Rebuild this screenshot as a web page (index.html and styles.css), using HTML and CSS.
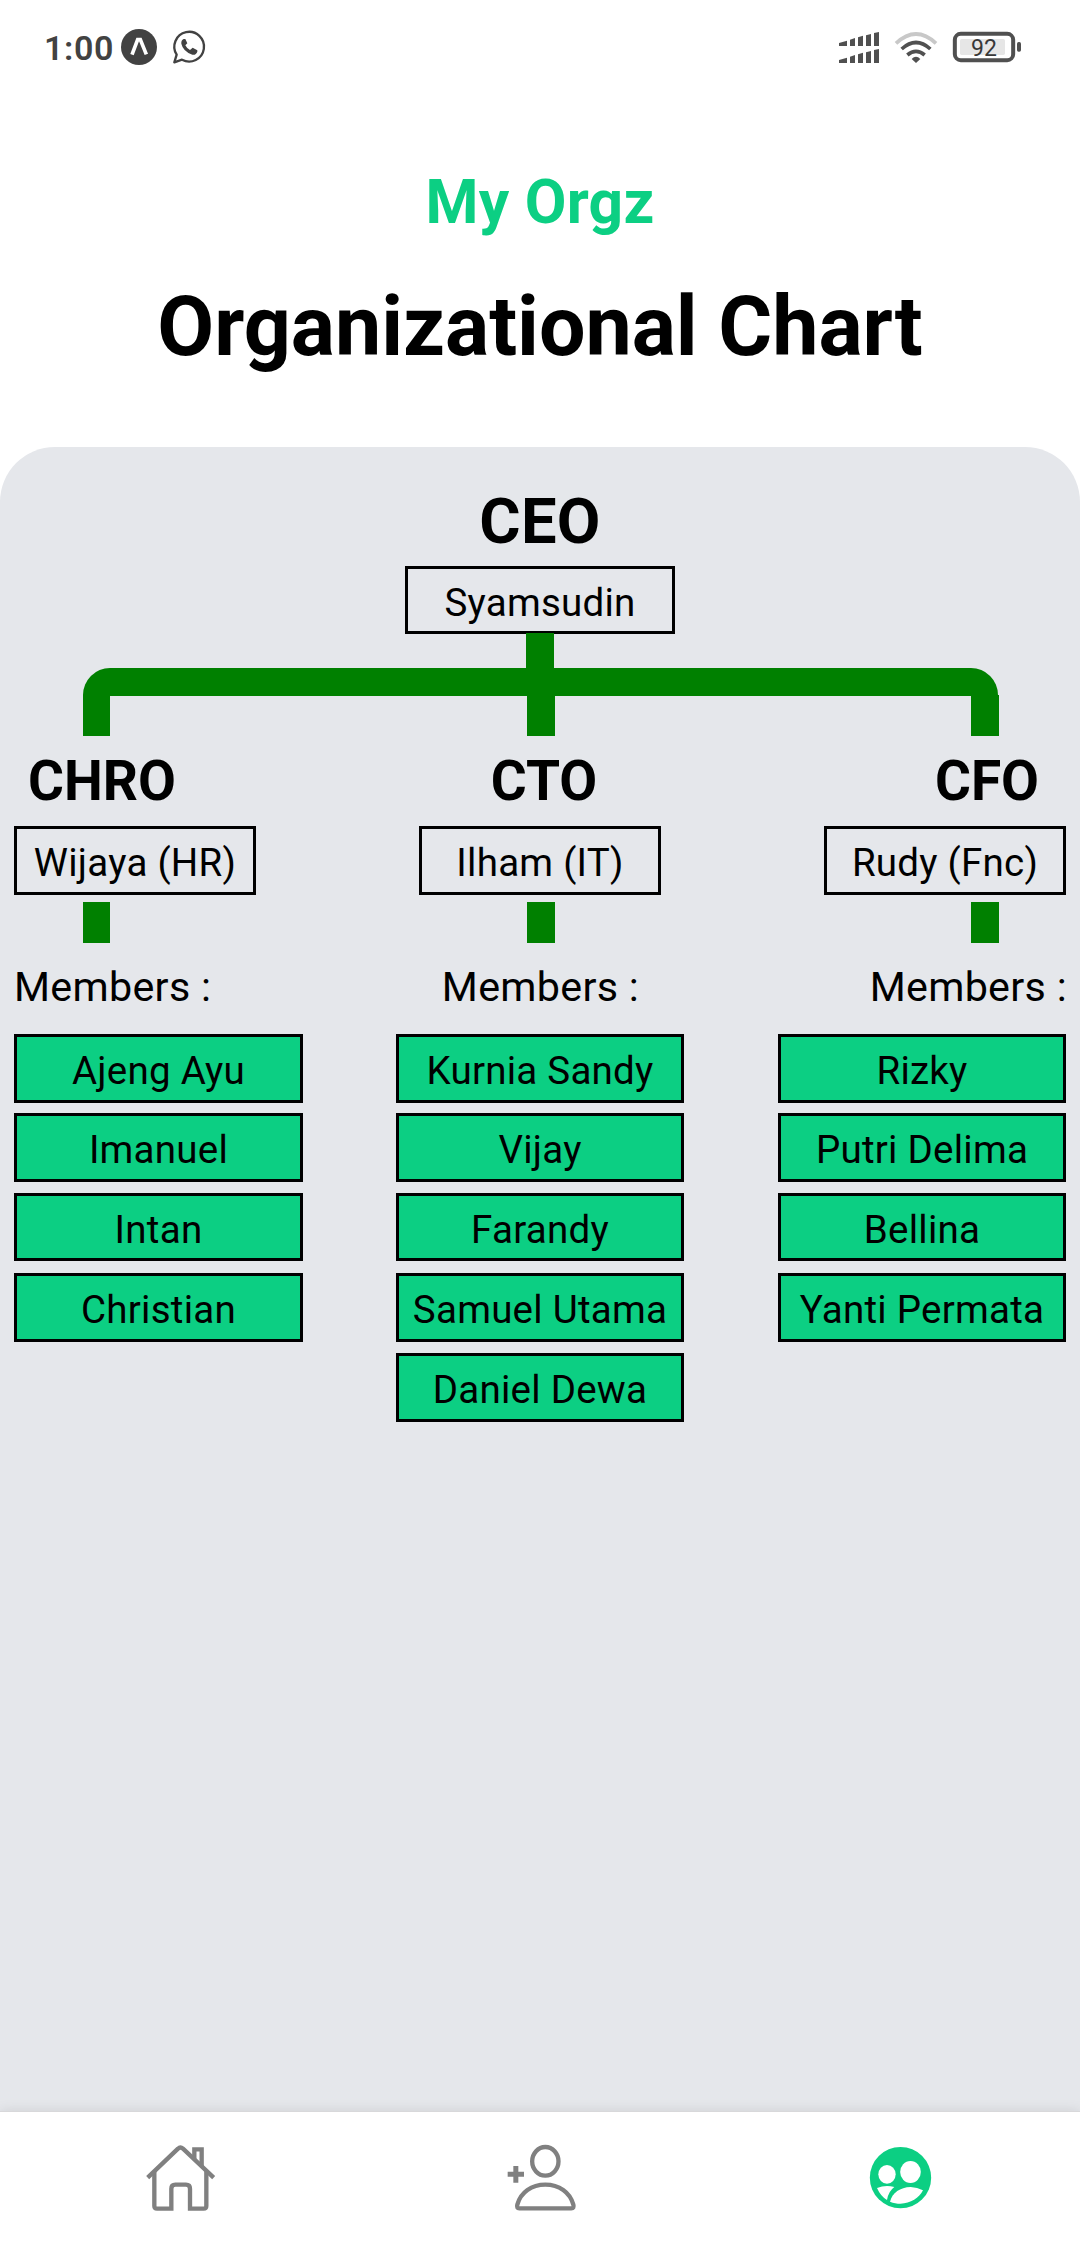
FILE: index.html
```html
<!DOCTYPE html>
<html lang="en">
<head>
<meta charset="utf-8">
<title>My Orgz</title>
<link rel="stylesheet" href="styles.css">
</head>
<body>
<div class="screen">
  <div class="status">
    <span class="clock">1:00</span>
    <svg class="status-apps" viewBox="264 0 276 210">
      <circle cx="327" cy="96" r="54" fill="#424242"/>
      <path d="M306 119L323 74H331L349 118" fill="none" stroke="#fff" stroke-width="11"/>
      <path d="M433 142L440 119A44.500 44.500 0 1 1 456 134Z" fill="none" stroke="#424242" stroke-width="7" stroke-linejoin="round"/>
      <path d="M461 72Q453 76 454 86Q459 109 487 119Q498 121 502 110V106L488 98L480 105Q470 100 466 91L472 85L466 72Z" fill="#424242"/>
    </svg>
    <svg class="status-system" viewBox="48 0 564 210">
      <g fill="#505050">
        <path d="M57 84L81 77V93H57ZM90 74L105 69V93H90ZM114 67L129 62V93H114ZM138 61L153 57V93H138ZM162 54L177 51V93H162Z"/>
        <path d="M57 135L81 128V144H57ZM90 125L105 120V144H90ZM114 118L129 113V144H114ZM138 112L153 108V144H138ZM162 105L177 102V144H162Z"/>
      </g>
      <g fill="none" stroke-width="11">
        <path d="M228 85Q288 29 348 85" stroke="#c8c8c8"/>
        <path d="M245 102Q288 63 331 102" stroke="#505050"/>
        <path d="M262 120Q288 98 314 120" stroke="#505050"/>
      </g>
      <path d="M275 132Q288 118 301 132L288 144Z" fill="#505050"/>
      <rect x="404.500" y="56.500" width="175" height="79" rx="18" fill="#fff" stroke="#505050" stroke-width="12"/>
      <rect x="420" y="72" width="135" height="48" rx="5" fill="#e6e6e6"/>
      <rect x="591" y="81" width="12" height="29" rx="5" fill="#505050"/>
      <text class="battery-text" x="492" y="123" text-anchor="middle">92</text>
    </svg>
  </div>

  <header class="header">
    <div class="brand">My Orgz</div>
    <h1 class="title">Organizational Chart</h1>
  </header>

  <main class="panel">
    <h2 class="ceo">CEO</h2>
    <div class="box box-ceo">Syamsudin</div>
    <div class="trunk"></div>
    <div class="bar"></div>
    <div class="stems stems-top"><i></i><i></i><i></i></div>
    <div class="row roles"><h3>CHRO</h3><h3>CTO</h3><h3>CFO</h3></div>
    <div class="row">
      <div class="box box-lead">Wijaya (HR)</div>
      <div class="box box-lead">Ilham (IT)</div>
      <div class="box box-lead">Rudy (Fnc)</div>
    </div>
    <div class="stems stems-low"><i></i><i></i><i></i></div>
    <div class="row labels"><span>Members :</span><span>Members :</span><span>Members :</span></div>
    <div class="row lists">
      <div class="list">
        <div class="box member">Ajeng Ayu</div>
        <div class="box member">Imanuel</div>
        <div class="box member">Intan</div>
        <div class="box member">Christian</div>
      </div>
      <div class="list">
        <div class="box member">Kurnia Sandy</div>
        <div class="box member">Vijay</div>
        <div class="box member">Farandy</div>
        <div class="box member">Samuel Utama</div>
        <div class="box member">Daniel Dewa</div>
      </div>
      <div class="list">
        <div class="box member">Rizky</div>
        <div class="box member">Putri Delima</div>
        <div class="box member">Bellina</div>
        <div class="box member">Yanti Permata</div>
      </div>
    </div>
  </main>

  <nav class="tabs">
    <a class="tab">
      <svg viewBox="-15 33 330 405" fill="none" stroke="#808080" stroke-width="13">
        <path d="M53 233L144 146Q151 139 159 146L251 233"/>
        <path d="M73 214V318Q73 326 81 326H124V266Q124 254 136 254H168Q180 254 180 266V326H221Q229 326 229 318V214"/>
        <path d="M193 176V148H215V198"/>
      </svg>
    </a>
    <a class="tab">
      <svg viewBox="-15 33 330 405" fill="none" stroke="#808080" stroke-width="13">
        <ellipse cx="166" cy="184" rx="39.500" ry="43"/>
        <path d="M88 325Q79 325 82 314C92 277 125 254 166 254S240 277 250 314Q253 325 244 325Z"/>
        <path d="M53 223H102M77.500 198V248" stroke-width="15"/>
      </svg>
    </a>
    <a class="tab">
      <svg viewBox="-15 33 330 405">
        <circle cx="151.500" cy="233" r="92" fill="#0ccf83"/>
        <g fill="#fff">
          <ellipse cx="111" cy="223" rx="26" ry="28"/>
          <ellipse cx="181.500" cy="216" rx="31" ry="33"/>
          <path d="M81 264Q107 253 133 261Q115 274 111 300Q92 289 81 264Z"/>
          <path d="M120 305C127 278 150 262 182 261Q202 262 219 271C204 301 163 322 120 305Z"/>
        </g>
      </svg>
    </a>
  </nav>
</div>
</body>
</html>
```

FILE: styles.css
```css
* { box-sizing: border-box; }

body {
  margin: 0;
  background: #fff;
  color: #000;
  font-family: Roboto, "Liberation Sans", sans-serif;
}

h1, h2, h3 { margin: 0; font-weight: 700; }

.screen {
  width: 1080px;
  height: 2246px;
  display: flex;
  flex-direction: column;
  overflow: hidden;
}

.status {
  height: 96px;
  display: flex;
  padding: 15px 56px 0 44px;
}

.clock {
  width: 74px;
  font-size: 34px;
  font-weight: 600;
  letter-spacing: 0.6px;
  line-height: 66px;
  color: #424242;
}

.status-apps { width: 92px; height: 70px; }
.status-system { width: 188px; height: 70px; margin-left: auto; }
.battery-text { font-size: 69px; font-weight: 400; fill: #383838; }

.header {
  height: 351px;
  padding-top: 67px;
  text-align: center;
}

.brand {
  font-size: 60.5px;
  font-weight: 700;
  letter-spacing: 0.25px;
  line-height: 80px;
  color: #0ccf83;
}

.title {
  margin-top: 34px;
  font-size: 82.5px;
  line-height: 100px;
}

.panel {
  flex: 1;
  padding-top: 37px;
  background: #e5e7eb;
  border-radius: 55px 55px 0 0;
}

.ceo {
  font-size: 63.25px;
  letter-spacing: 0.3px;
  line-height: 74px;
  text-align: center;
}

.box {
  height: 69px;
  padding-top: 5px;
  border: 3px solid #000;
  font-size: 38.5px;
  letter-spacing: 0.25px;
  line-height: 58px;
  text-align: center;
  white-space: nowrap;
}

.box-ceo { width: 270px; height: 68px; margin: 8px auto 0; }
.box-lead { width: 242px; }

.trunk {
  width: 28px;
  height: 35px;
  margin: -1px auto 0;
  background: #008000;
}

.bar {
  width: 915px;
  height: 28px;
  margin-left: 83px;
  border-radius: 27px 27px 0 0;
  background: #008000;
}

.stems {
  display: flex;
  justify-content: space-between;
  width: 916px;
  height: 41px;
  margin-left: 83px;
}

.stems i { width: 28px; background: #008000; }
.stems i:first-child { width: 27px; }
.stems-top { margin-top: -1px; }
.stems-low { margin-top: 7px; }

.row {
  display: flex;
  justify-content: space-between;
  padding: 0 14px;
}

.roles {
  display: grid;
  grid-template-columns: 1fr 1fr 1fr;
  margin: 13px 0;
  padding: 0 41px 0 28px;
  line-height: 64px;
}

.roles h3 { font-size: 55px; }
.roles h3:nth-child(2) { text-align: center; padding-left: 21px; }
.roles h3:nth-child(3) { text-align: right; }

.labels {
  margin-top: 19px;
  padding-right: 13px;
  font-size: 41.25px;
  letter-spacing: 0.3px;
  line-height: 50px;
}

.lists { margin-top: 22px; align-items: flex-start; }

.list {
  display: grid;
  width: 288px;
  grid-template-rows: 79px repeat(4, 80px);
}

.list:first-child { width: 289px; margin-right: -1px; }
.member { background: #0ccf83; }
.member:nth-child(3) { height: 68px; }

.tabs {
  position: relative;
  display: flex;
  height: 135px;
  background: #fff;
  border-top: 1px solid #d8d8da;
  box-shadow: 0 0 12px rgba(0, 0, 0, .1);
}

.tab {
  flex: 1;
  display: flex;
  justify-content: center;
}

.tab svg { width: 110px; height: 135px; margin-top: -1px; }
```
